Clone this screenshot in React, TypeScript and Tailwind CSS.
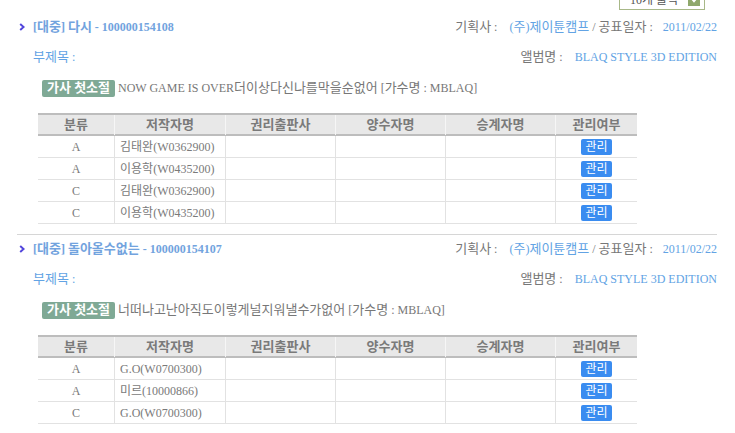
import React from 'react';

interface Credit { kind: string; name: string; code: string; }
interface Work {
  genre: string;
  title: string;
  code: string;
  company: string;
  date: string;
  album: string;
  lyric: string;
  singer: string;
  credits: Credit[];
}

const works: Work[] = [
  {
    genre: '대중',
    title: '다시',
    code: '100000154108',
    company: '(주)제이튠캠프',
    date: '2011/02/22',
    album: 'BLAQ STYLE 3D EDITION',
    lyric: 'NOW GAME IS OVER더이상다신나를막을순없어',
    singer: 'MBLAQ',
    credits: [
      { kind: 'A', name: '김태완', code: 'W0362900' },
      { kind: 'A', name: '이용학', code: 'W0435200' },
      { kind: 'C', name: '김태완', code: 'W0362900' },
      { kind: 'C', name: '이용학', code: 'W0435200' },
    ],
  },
  {
    genre: '대중',
    title: '돌아올수없는',
    code: '100000154107',
    company: '(주)제이튠캠프',
    date: '2011/02/22',
    album: 'BLAQ STYLE 3D EDITION',
    lyric: '너떠나고난아직도이렇게널지워낼수가없어',
    singer: 'MBLAQ',
    credits: [
      { kind: 'A', name: 'G.O', code: 'W0700300' },
      { kind: 'A', name: '미르', code: '10000866' },
      { kind: 'C', name: 'G.O', code: 'W0700300' },
    ],
  },
];

const headers = ['분류', '저작자명', '권리출판사', '양수자명', '승계자명', '관리여부'];
const cols = 'grid grid-cols-[77px_111px_110px_110px_110px_81px]';

// hangul runs render a bit larger so widths line up with the old gulim look
function Ko({ t }: { t: string }) {
  const parts = t.split(/([\uAC00-\uD7A3]+)/);
  return (
    <>
      {parts.map((p, i) =>
        /[\uAC00-\uD7A3]/.test(p) ? <span key={i} className="text-[13px]">{p}</span> : p
      )}
    </>
  );
}

function Bullet() {
  return (
    <svg width="6" height="8" viewBox="0 0 6 8">
      <path d="M1.2 1 L4.6 4 L1.2 7" stroke="#5246dc" strokeWidth="2" fill="none" />
    </svg>
  );
}

function CreditTable({ credits }: { credits: Credit[] }) {
  return (
    <div className="ml-[21px] w-[599px]">
      {/* header */}
      <div className={`${cols} h-[23px] border-y-2 border-[#bdbdbd] bg-[#e8e8e8]`}>
        {headers.map((h, i) => (
          <div
            key={h}
            className={`flex items-center justify-center text-[13px] font-bold text-[#7a7a7a] ${i < headers.length - 1 ? 'border-r border-[#f6f6f6]' : ''}`}
          >
            {h}
          </div>
        ))}
      </div>
      {credits.map((c, idx) => (
        <div key={idx} className={`${cols} h-[22px] border-b border-[#e2e2e2] text-[12px] text-[#7a7a7a]`}>
          <div className="flex items-center justify-center border-r border-[#e2e2e2]">{c.kind}</div>
          <div className="flex items-center border-r border-[#e2e2e2] pl-[5px]">{c.name}({c.code})</div>
          <div className="border-r border-[#e2e2e2]" />
          <div className="border-r border-[#e2e2e2]" />
          <div className="border-r border-[#e2e2e2]" />
          <div className="flex items-center justify-center">
            <span className="flex h-[16px] w-[31px] items-center justify-center rounded-[2px] bg-[#3a8cf0] text-[12px] text-white">관리</span>
          </div>
        </div>
      ))}
    </div>
  );
}

function WorkBlock({ w, first }: { w: Work; first: boolean }) {
  return (
    <div className={first ? 'pt-[7px] pb-[10px]' : 'border-t border-[#d6d6d6] pt-[4px]'}>
      <div className="flex h-5 items-center justify-between">
        <div className="flex items-center">
          <span className="ml-[2px] flex w-[14px] items-center"><Bullet /></span>
          <span className="text-[12px] font-bold text-[#72a3de]">
            <Ko t={`[${w.genre}] ${w.title} - ${w.code}`} />
          </span>
        </div>
        <div className="text-[12px] text-[#777]">
          <Ko t="기획사 :" /> <span className="ml-[9px] text-[#62a3e4]"><Ko t={w.company} /></span> / <Ko t="공표일자 :" />
          <span className="ml-[10px] text-[#62a3e4]">{w.date}</span>
        </div>
      </div>

      <div className="mt-[10px] flex h-5 items-center justify-between">
        <span className="ml-[16px] text-[12px] text-[#62a3e4]"><Ko t="부제목 :" /></span>
        <div className="text-[12px] text-[#777]">
          <Ko t="앨범명 :" /> <span className="ml-[9px] text-[#62a3e4]">{w.album}</span>
        </div>
      </div>

      <div className="mt-[11px] flex h-5 items-center">
        <span className="ml-[25px] flex h-[17px] w-[73px] items-center justify-center rounded-[2px] bg-[#7fa995] text-[13px] font-bold text-white">
          가사 첫소절
        </span>
        <span className="ml-[3px] text-[12px] text-[#777]">
          <Ko t={`${w.lyric} [가수명 : ${w.singer}]`} />
        </span>
      </div>

      <div className="mt-[15px]">
        <CreditTable credits={w.credits} />
      </div>
    </div>
  );
}

export default function App() {
  return (
    <div className="w-[735px] bg-white pl-[17px] pr-[18px] font-['Liberation_Serif','Noto_Sans_CJK_KR',serif]">
      {/* page-size select, scrolled mostly out of view */}
      <div className="flex h-[10px] items-end justify-end overflow-hidden pr-[12px]">
        <div className="flex h-[20px] w-[86px] shrink-0 items-center justify-between border border-[#a8b888] pl-[10px] pr-[4px]">
          <span className="text-[12px] text-[#555]">10개 출력</span>
          <span className="flex h-[12px] w-[12px] items-center justify-center bg-[#8fa86c]">
            <svg width="8" height="6" viewBox="0 0 8 6"><path d="M1 1 L4 4.5 L7 1" stroke="#fff" strokeWidth="1.5" fill="none" /></svg>
          </span>
        </div>
      </div>
      {works.map((w, i) => (
        <WorkBlock key={w.code} w={w} first={i === 0} />
      ))}
    </div>
  );
}
